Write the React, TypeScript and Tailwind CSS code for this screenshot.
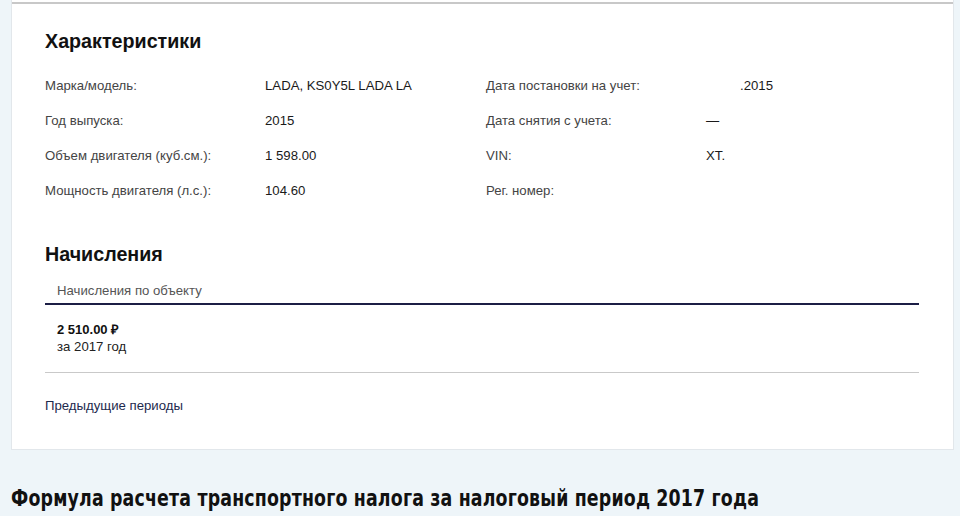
import React from "react";

const rows: [string, string, string, string][] = [
  ["Марка/модель:", "LADA, KS0Y5L LADA LA", "Дата постановки на учет:", ".2015"],
  ["Год выпуска:", "2015", "Дата снятия с учета:", "—"],
  ["Объем двигателя (куб.см.):", "1 598.00", "VIN:", "XT."],
  ["Мощность двигателя (л.с.):", "104.60", "Рег. номер:", ""],
];

export default function App() {
  return (
    <div className="w-[960px] h-[516px] overflow-hidden bg-[#eef5f9] font-['Liberation_Sans',Arial,sans-serif]">
      <div className="ml-[11px] w-[943px] bg-white border-x border-b border-[#e2e7eb]">
        <div className="h-[2px] bg-white" />
        <div className="border-t-2 border-[#c8c8c8] pl-[33px] pr-[34px] pb-[33px]">
          <h2 className="mt-[25px] text-[19.7px] leading-[24px] font-bold text-[#111]">Характеристики</h2>
          <div className="mt-[15px]">
            {rows.map((r, i) => (
              <div key={i} className="flex h-[35px] items-center text-[13.2px] leading-[16px]">
                <div className="w-[220px] text-[#444]">{r[0]}</div>
                <div className="w-[221px] text-[#1a1a1a]">{r[1]}</div>
                <div className="w-[220px] text-[#444]">{r[2]}</div>
                <div className={`text-[#1a1a1a] ${i === 0 ? "pl-[34px]" : ""}`}>{r[3]}</div>
              </div>
            ))}
          </div>
          <h2 className="mt-[34px] text-[19.7px] leading-[24px] font-bold text-[#111]">Начисления</h2>
          <div className="mt-[15px] border-b-2 border-[#1c1e45] pl-[12px] pb-[2px] text-[13.2px] leading-[20px] text-[#555]">
            Начисления по объекту
          </div>
          <div className="border-b border-[#c9c9c9] pl-[12px] pt-[16px] pb-[17px]">
            <div className="text-[13px] leading-[17px] font-bold text-[#111]">2 510.00 ₽</div>
            <div className="text-[13.2px] leading-[17px] text-[#222]">за 2017 год</div>
          </div>
          <div className="mt-[23px] text-[13.2px] leading-[20px] text-[#1d2a4d]">Предыдущие периоды</div>
        </div>
      </div>
      <h1 className="ml-[11px] mt-[33px] w-max origin-left scale-x-[0.84] text-[23px] leading-[30px] font-bold text-[#111] font-['DejaVu_Sans_Condensed','DejaVu_Sans',sans-serif] tracking-[0.2px]">
        Формула расчета транспортного налога за налоговый период 2017 года
      </h1>
    </div>
  );
}
